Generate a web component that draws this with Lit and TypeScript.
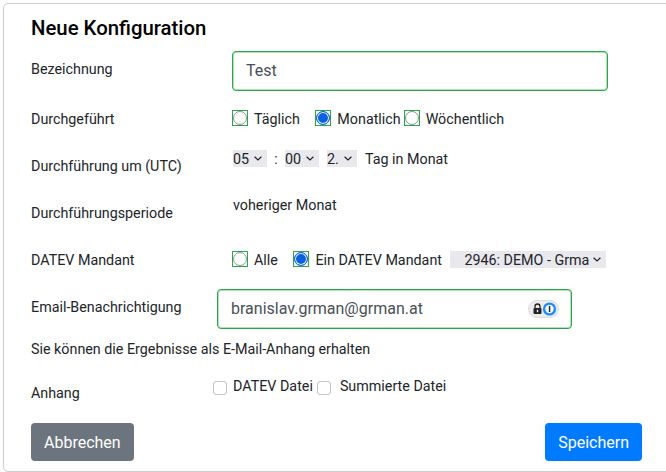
import {LitElement, html, css} from 'lit';
import {customElement} from 'lit/decorators.js';

@customElement('app-root')
export class AppRoot extends LitElement {
  static styles = css`
:host {
  display: block;
  width: 666px;
  height: 472px;
  overflow: hidden;
  background: #fff;
  font-family: Roboto, "Liberation Sans", sans-serif;
  font-size: 14.3px;
  line-height: 20px;
  color: #212529;
}

.card {
  box-sizing: border-box;
  width: 720px;
  height: 469px;
  margin: 3px 0 0 3px;
  padding: 12px 0 0 27px;
  border: 1px solid #ccc;
  border-radius: 5px;
}

.body {
  width: 611px;
  display: flex;
  flex-direction: column;
}

h1 {
  margin: 0 0 11px;
  font-size: 20.35px;
  line-height: 24px;
  font-weight: 500;
  color: #000;
}

.row {
  display: flex;
  align-items: flex-start;
}

.label {
  width: 201px;
  flex: none;
}

.text-input {
  box-sizing: border-box;
  height: 40px;
  padding: 0 13px 2px;
  border: 1px solid #28a745;
  border-radius: 4px;
  box-shadow: inset 0 0 0 1px rgba(40, 167, 69, 0.35);
  background: #fff;
  font: 16px Roboto, sans-serif;
  color: #495057;
  outline: none;
}

.name { width: 376px; }
.mail { width: 355px; }

.mail-wrap {
  position: relative;
  margin-left: -15px;
}

.pw-pill {
  position: absolute;
  left: 311px;
  top: 11px;
  box-sizing: border-box;
  width: 31px;
  height: 18px;
  border: 1px solid #ddd;
  border-radius: 9px;
  background: #ececec;
}

.pw-pill svg {
  display: block;
}

.choices {
  display: flex;
  align-items: center;
  height: 20px;
}

.radio-box {
  box-sizing: border-box;
  display: flex;
  align-items: center;
  justify-content: center;
  width: 16px;
  height: 16px;
  border: 1px solid #28a745;
  flex: none;
}

.radio-box input {
  appearance: none;
  box-sizing: border-box;
  width: 14px;
  height: 14px;
  margin: 0;
  border: 1.3px solid #8f8f9d;
  border-radius: 50%;
  background: #fff;
}

.radio-box input:checked {
  border: 1.5px solid #0a60df;
  background: #0a60df;
  box-shadow: inset 0 0 0 1px #fff;
}

.choice-text { margin: 2px 15.5px 0 6px; }
.choice-text.tight { margin-right: 3px; }
.choice-text.gap { margin-right: 8px; }

select {
  appearance: none;
  height: 17px;
  padding: 0;
  border: none;
  border-radius: 0;
  background: #e9e9ed url("data:image/svg+xml,%3Csvg xmlns='http://www.w3.org/2000/svg' width='8' height='5'%3E%3Cpath d='M.6.7 4 4l3.4-3.3' fill='none' stroke='%23222' stroke-width='1.2'/%3E%3C/svg%3E") no-repeat right 5px center;
  font: 14.3px Roboto, sans-serif;
  color: #212529;
}

.time { display: flex; align-items: center; height: 17px; margin-left: 1px; }
.s1, .s2 { width: 34px; }
.s3 { width: 30px; margin-left: 8px; }
.colon { width: 18px; text-align: center; }
.day { margin-left: 8px; }

.period { margin-left: 1px; }

.client {
  width: 156px;
  padding-left: 14.5px;
  margin-top: 1px;
}

.checks {
  display: flex;
  align-items: center;
  margin-left: -19px;
}

.checks input {
  appearance: none;
  box-sizing: border-box;
  width: 14px;
  height: 14px;
  margin: 4px 6px 0 0;
  border: 1px solid #c4c4c4;
  border-radius: 3px;
  background: #fff;
}

.checks span { margin-right: 4px; }
.checks span + input { margin-right: 9px; }

.footer {
  display: flex;
  justify-content: space-between;
  margin-top: 20px;
}

button {
  height: 38px;
  padding: 0 13px;
  border: none;
  border-radius: 4px;
  font: 16px Roboto, sans-serif;
  color: #fff;
}

.cancel { background: #6c757d; }
.save { background: #007bff; }

.mt8 { padding-top: 8px; }
.r-done { margin-top: 17px; }
.r-done .label { padding-top: 1px; }
.r-time { margin-top: 21px; }
.r-time .label { padding-top: 6px; }
.r-period { margin-top: 19px; }
.r-period .label { padding-top: 8px; }
.r-client { margin-top: 26px; }
.r-client .label { padding-top: 1px; }
.r-mail { margin-top: 19px; }
.r-hint { margin-top: 10px; }
.r-attach { margin-top: 17px; }
.r-attach .label { padding-top: 7px; }
`;

  private radio(name: string, checked: boolean) {
    return html`<span class="radio-box"><input type="radio" name=${name} ?checked=${checked} /></span>`;
  }

  protected render() {
    return html`
      <div class="card">
        <div class="body">
          <h1>Neue Konfiguration</h1>

          <div class="row">
            <div class="label mt8">Bezeichnung</div>
            <input class="text-input name" value="Test" />
          </div>

          <div class="row r-done">
            <div class="label">Durchgeführt</div>
            <div class="choices">
              ${this.radio('freq', false)}<span class="choice-text">Täglich</span>
              ${this.radio('freq', true)}<span class="choice-text tight">Monatlich</span>
              ${this.radio('freq', false)}<span class="choice-text">Wöchentlich</span>
            </div>
          </div>

          <div class="row r-time">
            <div class="label">Durchführung um (UTC)</div>
            <div class="time">
              <select class="s1"><option>05</option></select>
              <span class="colon">:</span>
              <select class="s2"><option>00</option></select>
              <select class="s3"><option>2.</option></select>
              <span class="day">Tag in Monat</span>
            </div>
          </div>

          <div class="row r-period">
            <div class="label">Durchführungsperiode</div>
            <div class="period">voheriger Monat</div>
          </div>

          <div class="row r-client">
            <div class="label">DATEV Mandant</div>
            <div class="choices">
              ${this.radio('client', false)}<span class="choice-text">Alle</span>
              ${this.radio('client', true)}<span class="choice-text gap">Ein DATEV Mandant</span>
              <select class="client"><option>2946: DEMO - Grma</option></select>
            </div>
          </div>

          <div class="row r-mail">
            <div class="label mt8">Email-Benachrichtigung</div>
            <div class="mail-wrap">
              <input class="text-input mail" value="branislav.grman@grman.at" />
              <div class="pw-pill">
                <svg width="29" height="16" viewBox="0 0 29 16">
                  <path d="M6 7V5.5a2.5 2.5 0 0 1 5 0V7" fill="none" stroke="#222" stroke-width="1.3" />
                  <rect x="4.5" y="7" width="8" height="6" rx="1" fill="#222" />
                  <rect x="7.8" y="8.8" width="1.4" height="2.4" fill="#eee" />
                  <circle cx="20.5" cy="8" r="5.4" fill="#fff" stroke="#1a8cff" stroke-width="2.4" />
                  <rect x="19.8" y="5" width="1.5" height="6" fill="#1b2a3c" />
                </svg>
              </div>
            </div>
          </div>

          <div class="r-hint">Sie können die Ergebnisse als E-Mail-Anhang erhalten</div>

          <div class="row r-attach">
            <div class="label">Anhang</div>
            <div class="checks">
              <input type="checkbox" /><span>DATEV Datei</span>
              <input type="checkbox" /><span>Summierte Datei</span>
            </div>
          </div>

          <div class="footer">
            <button class="cancel">Abbrechen</button>
            <button class="save">Speichern</button>
          </div>
        </div>
      </div>
    `;
  }
}
